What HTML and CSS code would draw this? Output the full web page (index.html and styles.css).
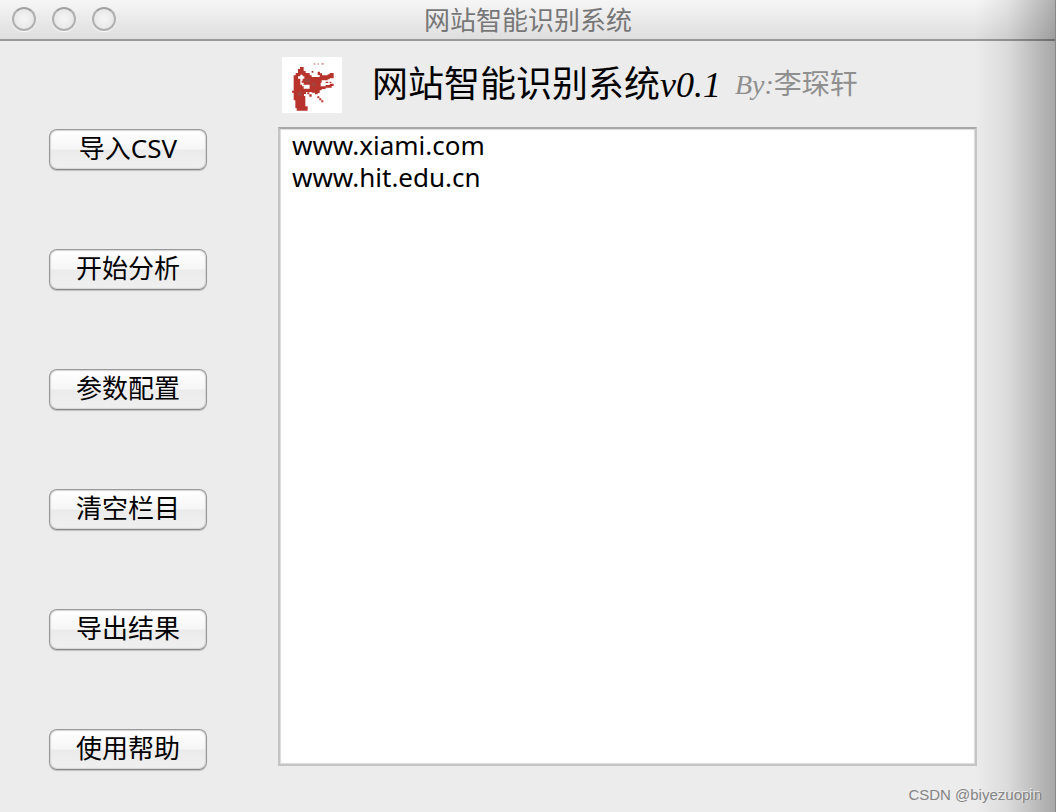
FILE: index.html
```html
<!DOCTYPE html>
<html lang="zh-CN">
<head>
  <meta charset="UTF-8" />
  <meta name="viewport" content="width=device-width, initial-scale=1.0"/>
  <title>网站智能识别系统</title>
  <link rel="stylesheet" href="styles.css">
</head>
<body>
  <div class="window">
    <header class="titlebar">
      <div class="lights">
        <button type="button" class="light" aria-label="关闭"></button>
        <button type="button" class="light" aria-label="最小化"></button>
        <button type="button" class="light" aria-label="缩放"></button>
      </div>
      <span class="window-title">网站智能识别系统</span>
    </header>

    <div class="content">
      <nav class="sidebar">
        <button type="button" class="btn">导入CSV</button>
        <button type="button" class="btn">开始分析</button>
        <button type="button" class="btn">参数配置</button>
        <button type="button" class="btn">清空栏目</button>
        <button type="button" class="btn">导出结果</button>
        <button type="button" class="btn">使用帮助</button>
      </nav>

      <main class="main">
        <div class="brand">
          <svg class="logo" viewBox="18 20 180 168" aria-hidden="true">
            <rect x="18" y="20" width="180" height="168" fill="#fff"/>
            <path fill="#b9332d" d="M72 50H83V62H89V68H101V75H107V80H131V74H125V64H132V69H138V75H155V72H161V68H173V84H161V87H155V90H137V97H134V108H149V104H161V100H173V107H167V112H149V116H137V120H131V128H125V132H117V127H107V125H90V131H84V137H88V168H95V181H62V173H58V150H53V127H48V121H53V75H59V68H66V56H72Z"/>
            <path fill="#fff" d="M73 73H80V78H85V85H80V91H77V97H83V103H101V115H83V108H78V103H73V85H66V78H73Z"/>
            <path fill="#a3443c" d="M86 85H103V96H86zM107 97H119V108H107zM66 125H78V137H66z"/>
            <path fill="#b9332d" d="M107 62H112V67H107zM149 94H157V98H149zM161 94H166V98H161zM94 126H100V132H94zM100 132H107V139H100zM124 138H130V144H124zM130 144H136V150H130zM136 150H142V156H136z"/>
            <path fill="#d99591" d="M113 39H118V43H113zM125 39H129V43H125zM137 38H143V43H137z"/>
          </svg>
          <h1 class="name">网站智能识别系统<em>v0.1</em></h1>
          <span class="author"><em>By:</em>李琛轩</span>
        </div>
        <textarea class="sites" aria-label="网站列表" spellcheck="false">www.xiami.com
www.hit.edu.cn</textarea>
      </main>
    </div>
    <span class="watermark">CSDN @biyezuopin</span>
  </div>
</body>
</html>
```
FILE: styles.css
```css
:root {
  --bg: #ececec;
  --line: #999;
  --ui: "Noto Sans", "Noto Sans CJK SC", sans-serif;
}

* {
  margin: 0;
  padding: 0;
  box-sizing: border-box;
}

body {
  font-family: var(--ui);
  background: var(--bg);
  color: #000;
}

.window {
  position: relative;
  display: flex;
  flex-direction: column;
  min-height: 100vh;
}

/* shade falling on the right edge of the window */
.window::after {
  content: "";
  position: absolute;
  top: 0;
  right: 0;
  bottom: 0;
  width: 80px;
  border-right: 1px solid #888;
  background: linear-gradient(to right, rgba(0, 0, 0, 0), rgba(0, 0, 0, 0.07) 40%, rgba(0, 0, 0, 0.29));
  pointer-events: none;
}

.titlebar {
  display: grid;
  grid-template-columns: 1fr auto 1fr;
  align-items: center;
  height: 41px;
  padding: 0 12px 2px;
  background: linear-gradient(#f6f6f6, #dedede);
  border-bottom: 2px solid var(--line);
}

.lights {
  display: flex;
  gap: 16px;
}

.light {
  width: 24px;
  height: 24px;
  border: 2px solid #b0b0b0;
  border-top-color: #a0a0a0;
  border-radius: 50%;
  background: radial-gradient(#f6f6f6, #e2e2e2);
  box-shadow: 0 1px 1px #fff;
}

.window-title {
  font-family: "Noto Sans CJK SC", sans-serif;
  font-size: 26px;
  line-height: 36px;
  color: #777;
}

.content {
  flex: 1;
  display: grid;
  grid-template-columns: 158px 1fr;
  column-gap: 71px;
  padding: 16px 79px 42px 49px;
}

.sidebar {
  display: flex;
  flex-direction: column;
  gap: 79px;
  padding-top: 72px;
}

.btn {
  height: 41px;
  padding-bottom: 3px;
  border: 1px solid #9a9a9a;
  border-bottom-color: #888;
  border-radius: 8px;
  background: linear-gradient(#fff, #f6f6f6 48%, #ebebeb 52%, #f0f0f0);
  box-shadow: 0 1px 1px rgba(0, 0, 0, 0.2), inset 0 0 1px 1px #d4d4d4;
  font-family: var(--ui);
  font-size: 26px;
  line-height: 36px;
  color: #000;
}

.main {
  display: flex;
  flex-direction: column;
  gap: 14px;
  padding-bottom: 4px;
}

.brand {
  display: flex;
  align-items: center;
  height: 56px;
  padding-left: 4px;
}

.logo {
  width: 60px;
  height: 56px;
  margin-right: 30px;
}

.name,
.author {
  padding-bottom: 4px;
  font-family: "Noto Sans CJK SC", sans-serif;
  font-weight: 400;
  line-height: 52px;
  white-space: nowrap;
}

.name {
  margin-right: 14px;
  font-size: 36px;
}

.author {
  font-size: 28px;
  color: #8f8f8f;
}

.name em,
.author em {
  font-family: "Liberation Serif", serif;
}

.sites {
  flex: 1;
  width: 100%;
  padding: 0 12px;
  border: 2px solid #c4c4c4;
  border-top-color: #a8a8a8;
  background: #fff;
  box-shadow: inset 0 0 1px 1px #dcdcdc;
  font-family: var(--ui);
  font-size: 26px;
  line-height: 32px;
  color: #000;
  resize: none;
  outline: none;
}

.watermark {
  position: absolute;
  right: 14px;
  bottom: 7px;
  z-index: 1;
  font-family: "Liberation Sans", sans-serif;
  font-size: 15px;
  line-height: 20px;
  color: #858585;
  text-shadow: -1px -1px 0 #eee;
}
```
